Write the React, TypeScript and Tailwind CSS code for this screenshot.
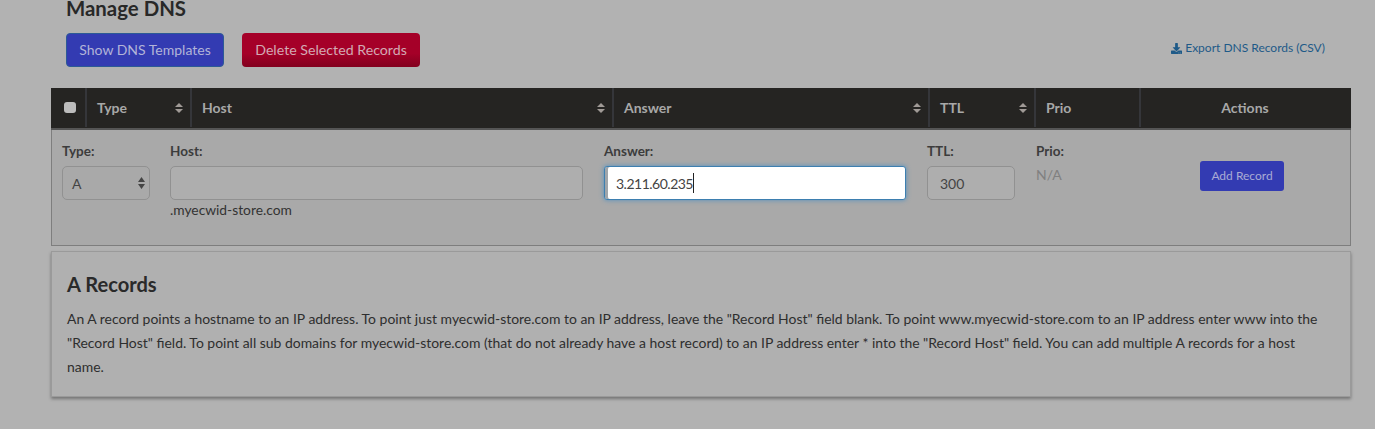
import { FaDownload } from "react-icons/fa";

const font = "font-['Lato','Open_Sans',sans-serif]";

const COLUMNS = [
  { label: "Type", width: "w-[105px]", sort: true },
  { label: "Host", width: "w-[422px]", sort: true },
  { label: "Answer", width: "w-[316px]", sort: true },
  { label: "TTL", width: "w-[106px]", sort: true },
  { label: "Prio", width: "w-[105px]", sort: false },
];

function SortArrows({ color = "#a09a96", small = false }: { color?: string; small?: boolean }) {
  return (
    <svg width={small ? 7 : 8} height={small ? 12 : 10} viewBox={small ? "0 0 7 12" : "0 0 8 10"} className="shrink-0">
      <path d={small ? "M3.5 0 L7 5 H0 Z M0 7 H7 L3.5 12 Z" : "M4 0 L8 4 H0 Z M0 6 H8 L4 10 Z"} fill={color} />
    </svg>
  );
}

function Field({ label, className, children }: { label: string; className: string; children: React.ReactNode }) {
  return (
    <div className={className}>
      <label className="block h-[36px] pt-[13px] text-[13.5px] leading-[16px] font-bold text-[#3c3c3c]">{label}</label>
      {children}
    </div>
  );
}

export default function App() {
  return (
    <div className={`${font} relative h-[429px] overflow-hidden bg-[#b2b2b2] text-[#2a2a2a]`}>
      <div className="pl-[66px] pr-[50px]">
        <h2 className="h-[20px] text-[20.4px] leading-[17px] font-bold text-[#282828]">Manage DNS</h2>
        <div className="mt-[13px] flex items-center gap-[18px]">
          <button className="h-[34px] w-[158px] rounded-[4px] border border-[#2c5a96] bg-[#333bb2] pb-[2px] text-[14px] text-[#b2b4d8]">
            Show DNS Templates
          </button>
          <button className="h-[34px] w-[178px] rounded-[4px] bg-gradient-to-b from-[#a50028] from-60% to-[#82001e] pb-[1px] text-[14.2px] text-[#d2aab4]">
            Delete Selected Records
          </button>
          <a className="mb-[4px] ml-auto flex items-center gap-[3px] text-[12px] text-[#1e5a88]">
            <FaDownload size={11} />
            Export DNS Records (CSV)
          </a>
        </div>
      </div>

      <div className="mx-[51px] mt-[21px] w-[1300px]">
        <div className="flex h-[42px] items-stretch border-b-2 border-[#555] bg-[#252422] pb-[1px] text-[14px] font-bold text-[#a8a8a8]">
          <div className="flex w-[34px] items-center justify-center">
            <span className="ml-[3px] h-[11px] w-[12px] rounded-[3px] bg-[#bcbcbc]" />
          </div>
          {COLUMNS.map((col) => (
            <div key={col.label} className={`${col.width} flex items-center justify-between border-l-2 border-[#35363a] pr-[7px] pl-[10px]`}>
              <span>{col.label}</span>
              {col.sort && <SortArrows />}
            </div>
          ))}
          <div className="flex w-[212px] items-center justify-center border-l-2 border-[#35363a] pr-[2px]">Actions</div>
        </div>

        <div className="flex h-[116px] items-start gap-[20px] border-x border-b border-[#7e7e7e] bg-[#a9a9a9] pl-[10px]">
          <Field label="Type:" className="w-[88px]">
            <div className="flex h-[34px] items-center justify-between rounded-[5px] border border-[#919191] pr-[4px] pl-[9px] text-[14px] text-[#444]">
              A
              <SortArrows color="#444" small />
            </div>
          </Field>
          <Field label="Host:" className="w-[413px]">
            <div className="h-[34px] rounded-[5px] border border-[#919191] bg-[#aeaeae]" />
            <p className="mt-[1px] text-[13.8px] leading-[17px] text-[#333]">.myecwid-store.com</p>
          </Field>
          <Field label="Answer:" className="ml-[1px] w-[302px]">
            <div className="flex h-[34px] items-center rounded-[3px] border border-[#3d7fb0] bg-white pl-[11px] text-[14px] tracking-[-0.5px] text-[#444] shadow-[0_0_5px_#4f8fc0,inset_3px_0_0_#9fa5aa]">
              3.211.60.235
              <span className="h-[20px] w-px bg-[#222]" />
            </div>
          </Field>
          <Field label="TTL:" className="ml-[1px] w-[88px]">
            <div className="flex h-[34px] items-center rounded-[5px] border border-[#919191] bg-[#aeaeae] pl-[12px] text-[14px] text-[#444]">300</div>
          </Field>
          <Field label="Prio:" className="ml-[1px] w-[60px]">
            <p className="text-[14px] leading-[18px] text-[#808080]">N/A</p>
          </Field>
          <button className="mt-[31px] ml-[84px] h-[30px] w-[84px] rounded-[3px] bg-[#333bb2] text-[12px] text-[#a9abd4]">Add Record</button>
        </div>

        <div className="mt-[5px] h-[146px] border border-[#9a9a9a] bg-[#b0b0b0] pt-[20px] pr-[18px] pl-[15px] shadow-[0_2px_3px_rgba(0,0,0,0.35)]">
          <h3 className="text-[20.1px] leading-[25px] font-bold text-[#2a2a2a]">A Records</h3>
          <p className="mt-[10px] text-[13.94px] leading-[24px] text-[#2e2e2e]">
            An A record points a hostname to an IP address. To point just myecwid-store.com to an IP address, leave the "Record Host" field blank. To point www.myecwid-store.com to an IP address enter www into the "Record Host" field. To point all sub domains for myecwid-store.com (that do not already have a host record) to an IP address enter * into the "Record Host" field. You can add multiple A records for a host name.
          </p>
        </div>
      </div>
    </div>
  );
}
